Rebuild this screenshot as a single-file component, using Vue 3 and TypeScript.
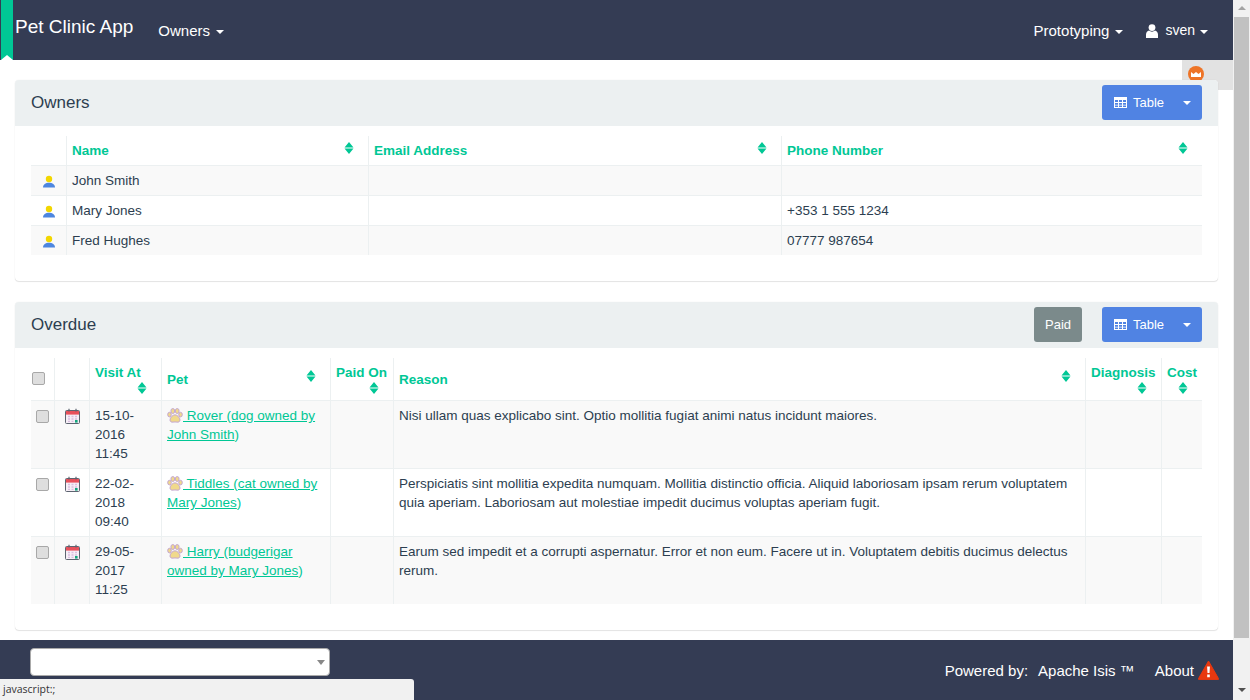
<script setup lang="ts">
interface Owner { name: string; email: string; phone: string }
interface Visit { date: string; pet: string; owner: string; reason: string }

const ownerCols: number[] = [36, 302, 413, 420]
const visitCols: number[] = [24, 35, 72, 169, 63, 692, 76, 40]

const owners: Owner[] = [
  { name: 'John Smith', email: '', phone: '' },
  { name: 'Mary Jones', email: '', phone: '+353 1 555 1234' },
  { name: 'Fred Hughes', email: '', phone: '07777 987654' },
]

const visits: Visit[] = [
  {
    date: '15-10-2016 11:45',
    pet: 'Rover (dog owned by',
    owner: 'John Smith',
    reason: 'Nisi ullam quas explicabo sint. Optio mollitia fugiat animi natus iure incidunt maiores.'.replace(' iure', ''),
  },
  {
    date: '22-02-2018 09:40',
    pet: 'Tiddles (cat owned by',
    owner: 'Mary Jones',
    reason: 'Perspiciatis sint mollitia expedita numquam. Mollitia distinctio officia. Aliquid laboriosam ipsam rerum voluptatem quia aperiam. Laboriosam aut molestiae impedit ducimus voluptas aperiam fugit.',
  },
  {
    date: '29-05-2017 11:25',
    pet: 'Harry (budgerigar',
    owner: 'owned by Mary Jones',
    reason: 'Earum sed impedit et a corrupti aspernatur. Error et non eum. Facere ut in. Voluptatem debitis ducimus delectus rerum.',
  },
]
</script>

<template>
  <div class="shell">
    <div class="page">
      <header class="nav">
        <span class="ribbon"></span>
        <span class="brand">Pet Clinic App</span>
        <span class="nav-item owners">Owners <i class="caret"></i></span>
        <span class="nav-item proto">Prototyping <i class="caret"></i></span>
        <span class="nav-item user">
          <svg class="user-icon" viewBox="0 0 12 14" width="12" height="14">
            <circle cx="6" cy="3.6" r="3.4" fill="#fff" />
            <path d="M0 14V10.5C0 8.3 1.6 7 3 6.6 3.8 7.3 4.8 7.7 6 7.7S8.2 7.3 9 6.6C10.4 7 12 8.3 12 10.5V14Z" fill="#fff" />
          </svg>
          <span class="sven">sven</span><i class="caret"></i>
        </span>
      </header>

      <main class="main">
        <div class="debug">
          <svg viewBox="0 0 16 16" width="16" height="16">
            <circle cx="8" cy="8" r="8" fill="#ee7427" />
            <path d="M3 6 5.5 8 8 6 10.5 8 13 6V11H3Z" fill="#fff" />
          </svg>
        </div>

        <section class="panel first">
          <div class="panel-head">
            <h3 class="panel-title">Owners</h3>
            <div class="btn btn-blue">
              <svg class="table-icon" viewBox="0 0 13 11" width="13" height="11">
                <path d="M0 0H13V11H0ZM1 3V5H4V3ZM5 3V5H8V3ZM9 3V5H12V3ZM1 6V7.7H4V6ZM5 6V7.7H8V6ZM9 6V7.7H12V6ZM1 8.6V10H4V8.6ZM5 8.6V10H8V8.6ZM9 8.6V10H12V8.6Z" fill="#fff" fill-rule="evenodd" />
              </svg>
              <span>Table</span>
              <i class="caret btn-caret"></i>
            </div>
          </div>
          <div class="panel-body">
            <table class="grid">
              <colgroup><col v-for="(w, i) in ownerCols" :key="i" :style="{ width: w + 'px' }" /></colgroup>
              <thead>
                <tr>
                  <th></th>
                  <th v-for="h in ['Name', 'Email Address', 'Phone Number']" :key="h">
                    <div class="th-line">
                      <span>{{ h }}</span>
                      <svg class="sort" viewBox="0 0 10 12" width="10" height="12"><path d="M5 0 9.5 5.5H.5ZM.5 6.5H9.5L5 12Z" /></svg>
                    </div>
                  </th>
                </tr>
              </thead>
              <tbody>
                <tr v-for="o in owners" :key="o.name">
                  <td class="center">
                    <svg class="person" viewBox="0 0 14 14" width="14" height="14">
                      <path d="M1 13.5C1 10.5 3.5 8.8 7 8.8S13 10.5 13 13.5Z" fill="#4d86e0" />
                      <circle cx="7" cy="5" r="3.2" fill="#f2d600" />
                    </svg>
                  </td>
                  <td>{{ o.name }}</td>
                  <td>{{ o.email }}</td>
                  <td>{{ o.phone }}</td>
                </tr>
              </tbody>
            </table>
          </div>
        </section>

        <section class="panel second">
          <div class="panel-head">
            <h3 class="panel-title">Overdue</h3>
            <div class="btn btn-grey">Paid</div>
            <div class="btn btn-blue">
              <svg class="table-icon" viewBox="0 0 13 11" width="13" height="11">
                <path d="M0 0H13V11H0ZM1 3V5H4V3ZM5 3V5H8V3ZM9 3V5H12V3ZM1 6V7.7H4V6ZM5 6V7.7H8V6ZM9 6V7.7H12V6ZM1 8.6V10H4V8.6ZM5 8.6V10H8V8.6ZM9 8.6V10H12V8.6Z" fill="#fff" fill-rule="evenodd" />
              </svg>
              <span>Table</span>
              <i class="caret btn-caret"></i>
            </div>
          </div>
          <div class="panel-body">
            <table class="grid">
              <colgroup><col v-for="(w, i) in visitCols" :key="i" :style="{ width: w + 'px' }" /></colgroup>
              <thead>
                <tr>
                  <th class="tick-head"><input class="tick" type="checkbox" aria-label="Select all" /></th>
                  <th></th>
                  <th>
                    <div class="th-stack"><span>Visit At</span>
                      <svg class="sort" viewBox="0 0 10 12" width="10" height="12"><path d="M5 0 9.5 5.5H.5ZM.5 6.5H9.5L5 12Z" /></svg>
                    </div>
                  </th>
                  <th>
                    <div class="th-line"><span>Pet</span>
                      <svg class="sort" viewBox="0 0 10 12" width="10" height="12"><path d="M5 0 9.5 5.5H.5ZM.5 6.5H9.5L5 12Z" /></svg>
                    </div>
                  </th>
                  <th>
                    <div class="th-stack"><span>Paid On</span>
                      <svg class="sort" viewBox="0 0 10 12" width="10" height="12"><path d="M5 0 9.5 5.5H.5ZM.5 6.5H9.5L5 12Z" /></svg>
                    </div>
                  </th>
                  <th>
                    <div class="th-line"><span>Reason</span>
                      <svg class="sort" viewBox="0 0 10 12" width="10" height="12"><path d="M5 0 9.5 5.5H.5ZM.5 6.5H9.5L5 12Z" /></svg>
                    </div>
                  </th>
                  <th>
                    <div class="th-stack"><span>Diagnosis</span>
                      <svg class="sort" viewBox="0 0 10 12" width="10" height="12"><path d="M5 0 9.5 5.5H.5ZM.5 6.5H9.5L5 12Z" /></svg>
                    </div>
                  </th>
                  <th>
                    <div class="th-stack"><span>Cost</span>
                      <svg class="sort" viewBox="0 0 10 12" width="10" height="12"><path d="M5 0 9.5 5.5H.5ZM.5 6.5H9.5L5 12Z" /></svg>
                    </div>
                  </th>
                </tr>
              </thead>
              <tbody>
                <tr v-for="v in visits" :key="v.date">
                  <td class="tick-cell"><input class="tick" type="checkbox" aria-label="Select row" /></td>
                  <td class="center">
                    <svg class="cal" viewBox="0 0 15 16" width="15" height="16">
                      <rect x=".5" y="2.5" width="14" height="13" rx="1" fill="#f6eef6" stroke="#5d6470" />
                      <rect x="1" y="3" width="13" height="3.6" fill="#e8505b" />
                      <path d="M4 .8V3.4M11 .8V3.4" stroke="#5d6470" stroke-width="1.2" />
                      <path d="M3 8.5H5M6.5 8.5H8.5M10 8.5H12M3 11H5M6.5 11H8.5M10 11H12M3 13.4H5M6.5 13.4H8.5" stroke="#d9bfe0" stroke-width="1.4" />
                      <rect x="10" y="12" width="2.6" height="2.6" fill="#12a77d" />
                    </svg>
                  </td>
                  <td>{{ v.date }}</td>
                  <td>
                    <a class="link" href="#"><span class="u"><svg class="paw" viewBox="0 0 16 15" width="16" height="15">
                      <g fill="#f0d98c" stroke="#c4a6d0" stroke-width="1">
                        <ellipse cx="2.5" cy="6.6" rx="1.8" ry="2.3" />
                        <ellipse cx="5.8" cy="3" rx="1.9" ry="2.5" />
                        <ellipse cx="10.2" cy="3" rx="1.9" ry="2.5" />
                        <ellipse cx="13.5" cy="6.6" rx="1.8" ry="2.3" />
                        <path d="M8 6.8C10.2 6.8 13 9.6 13 12 13 13.8 11.4 14.4 10 14.1 9 13.9 7 13.9 6 14.1 4.6 14.4 3 13.8 3 12 3 9.6 5.8 6.8 8 6.8Z" />
                      </g>
                    </svg> {{ v.pet }}</span> <span class="u">{{ v.owner }}</span></a><span class="link-tail">)</span>
                  </td>
                  <td></td>
                  <td>{{ v.reason }}</td>
                  <td></td>
                  <td></td>
                </tr>
              </tbody>
            </table>
          </div>
        </section>
      </main>

      <footer class="foot">
        <div class="select"><i class="select-arrow"></i></div>
        <div class="foot-right">
          <span class="powered">Powered by:</span>
          <span class="isis">Apache Isis ™</span>
          <span class="about">About</span>
          <svg class="warn" viewBox="0 0 21 20" width="21" height="20">
            <path d="M10.5 1 20.5 18.6C20.8 19.2 20.5 19.6 19.9 19.6H1.1C.5 19.6.2 19.2.5 18.6Z" fill="#e8380f" stroke="#e8380f" stroke-linejoin="round" />
            <path d="M9.1 6.5H11.9L11.5 13H9.5ZM9.2 14.6H11.8V17.2H9.2Z" fill="#fff" />
          </svg>
        </div>
      </footer>
    </div>

    <div class="scrollbar" aria-hidden="true">
      <i class="arrow arrow-up"></i>
      <div class="thumb"></div>
      <i class="arrow arrow-down"></i>
    </div>

    <div class="status">javascript:;</div>
  </div>
</template>

<style>
html, body { margin: 0; overflow: hidden; background: #fff; }
</style>

<style scoped>
.shell {
  position: relative;
  display: flex;
  width: 1250px;
  height: 700px;
  overflow: hidden;
  font-family: "Liberation Sans", Arial, sans-serif;
  font-size: 13.5px;
  line-height: 19px;
  color: #2c3e50;
}
.page {
  width: 1233px;
  display: flex;
  flex-direction: column;
}
.nav {
  position: relative;
  flex: 0 0 60px;
  display: flex;
  align-items: center;
  background: #343c54;
  color: #fff;
  padding: 0 25px 0 15px;
}
.ribbon {
  position: absolute;
  left: 1px;
  top: 0;
  width: 12px;
  height: 60px;
  background: #00c795;
}
.ribbon::after {
  content: "";
  position: absolute;
  left: 0;
  bottom: 0;
  width: 12px;
  height: 5px;
  background: #fff;
  clip-path: polygon(50% 0, 100% 100%, 0 100%);
}
.brand {
  font-size: 19px;
  line-height: 24px;
  margin-bottom: 6px;
}
.nav-item {
  font-size: 15px;
  margin-top: 1px;
  white-space: nowrap;
  display: flex;
  align-items: center;
}
.owners { margin-left: 25px; }
.proto { margin-left: auto; }
.user { margin-left: 23px; }
.caret {
  display: inline-block;
  width: 0;
  height: 0;
  margin-left: 6px;
  margin-top: 2px;
  border-left: 4px solid transparent;
  border-right: 4px solid transparent;
  border-top: 4px solid #fff;
}
.user-icon { margin-right: 7px; }
.sven { font-size: 14px; }
.user .caret { margin-left: 5px; }
.main {
  position: relative;
  flex: 1;
  padding: 20px 15px 0;
  box-sizing: border-box;
}
.debug {
  position: absolute;
  right: 0;
  top: 0;
  width: 51px;
  height: 30px;
  background: #e2e2e2;
}
.debug svg {
  display: block;
  margin: 6px 0 0 6px;
}
.panel {
  position: relative;
  background: #fff;
  border-radius: 4px;
  box-shadow: 0 1px 1px rgba(0, 0, 0, 0.1), 0 0 1px rgba(0, 0, 0, 0.12);
}
.first { height: 201px; margin-bottom: 21px; }
.second { height: 328px; }
.panel-head {
  height: 46px;
  box-sizing: border-box;
  display: flex;
  align-items: flex-start;
  padding: 5px 16px 0;
  background: #ecf0f1;
  border-radius: 4px 4px 0 0;
}
.panel-title {
  margin: 8px auto 0 0;
  font-size: 17px;
  font-weight: 400;
  line-height: 20px;
  color: #2c3e50;
}
.btn {
  height: 35px;
  box-sizing: border-box;
  display: flex;
  align-items: center;
  border-radius: 3px;
  color: #fff;
  font-size: 13px;
  padding-bottom: 1px;
}
.btn-blue {
  width: 100px;
  background: #5083e3;
  padding-left: 12px;
}
.btn-grey {
  width: 48px;
  justify-content: center;
  background: #7b8a8b;
  margin-right: 20px;
}
.table-icon { margin-right: 6px; }
.btn-caret { margin-left: 19px; margin-top: 2px; }
.panel-body { padding: 10px 16px 0; }
.grid {
  width: 1171px;
  table-layout: fixed;
  border-collapse: separate;
  border-spacing: 0;
}
.grid th,
.grid td {
  padding: 5px;
  border-right: 1px solid #ecf0f1;
  vertical-align: top;
  text-align: left;
}
.grid th:last-child,
.grid td:last-child { border-right: 0; }
.grid th {
  border-bottom: 1px solid #ecf0f1;
  color: #00c795;
  font-weight: 700;
  vertical-align: middle;
  white-space: nowrap;
}
.grid td { border-bottom: 1px solid #ecf0f1; }
.grid tbody tr:last-child td { border-bottom: 0; }
.grid tbody tr:nth-child(odd) td { background: #f9f9f9; }
.th-line {
  display: flex;
  align-items: center;
  justify-content: space-between;
}
.sort {
  display: block;
  fill: #00c795;
  flex: none;
  margin-right: 9px;
}
.th-line .sort { margin-top: -6px; }
.th-stack { display: block; }
.th-stack > span { display: block; }
.th-stack .sort { margin: 0 9px 1px auto; }
.center { text-align: center !important; }
.person { display: block; margin: 3px auto 0; }
.cal { display: block; margin: 2px auto 0; }
.tick {
  appearance: none;
  display: block;
  width: 13px;
  height: 13px;
  margin: 0;
  box-sizing: border-box;
  background: #dedede;
  border: 1px solid #a8a8a8;
  border-radius: 2px;
}
.tick-head { padding: 0 1px 2px !important; }
.tick-cell { padding-top: 9px !important; }
.link {
  color: #00c795;
  text-decoration: none;
}
.u { text-decoration: underline; }
.link-tail { color: #00c795; }
.paw { vertical-align: -3px; }
.foot {
  flex: 0 0 60px;
  display: flex;
  align-items: flex-start;
  background: #343c54;
  color: #fff;
  font-size: 15px;
  padding: 8px 14px 0 30px;
  box-sizing: border-box;
}
.select {
  position: relative;
  width: 300px;
  height: 28px;
  box-sizing: border-box;
  background: #fff;
  border: 1px solid #aaa;
  border-radius: 4px;
}
.select-arrow {
  position: absolute;
  right: 4px;
  top: 11px;
  border-left: 4px solid transparent;
  border-right: 4px solid transparent;
  border-top: 5px solid #888;
}
.foot-right {
  margin-left: auto;
  display: flex;
  align-items: center;
  height: 28px;
  margin-top: 8px;
  white-space: nowrap;
}
.isis { margin-left: 10px; }
.about { margin-left: 20px; }
.warn { margin-left: 4px; margin-top: 0; }
.scrollbar {
  width: 17px;
  flex: none;
  background: #f1f1f1;
  display: flex;
  flex-direction: column;
  align-items: center;
}
.thumb {
  width: 15px;
  height: 621px;
  background: #c1c1c1;
}
.arrow {
  flex: 0 0 auto;
  width: 0;
  height: 0;
  border-left: 4px solid transparent;
  border-right: 4px solid transparent;
}
.arrow-up {
  margin: 6px 0 7px;
  border-bottom: 4px solid #a3a3a3;
}
.arrow-down {
  margin-top: 50px;
  border-top: 4px solid #505050;
}
.status {
  position: absolute;
  left: 0;
  bottom: 0;
  width: 414px;
  height: 21px;
  box-sizing: border-box;
  padding: 1px 3px;
  background: #f1f1f1;
  border-top-right-radius: 3px;
  font-family: "Open Sans", sans-serif;
  font-size: 10.5px;
  line-height: 19px;
  color: #333;
}
</style>
